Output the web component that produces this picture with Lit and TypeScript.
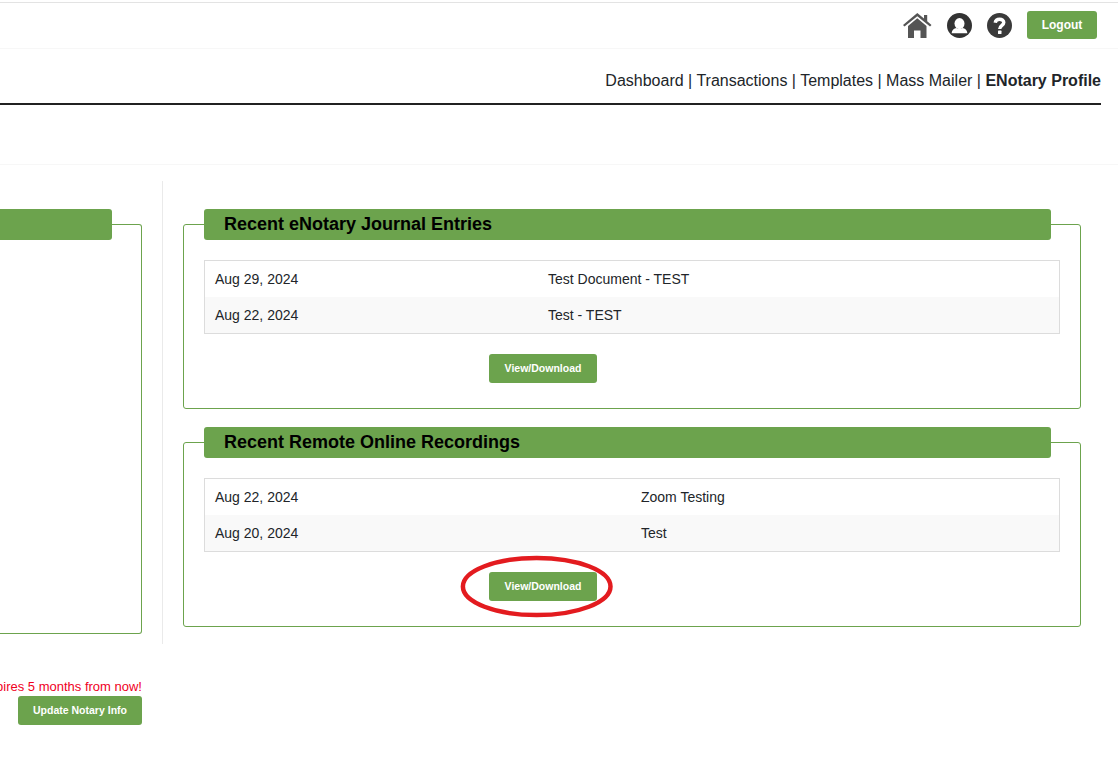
import { LitElement, html, css } from "lit";
import { customElement } from "lit/decorators.js";

@customElement("app-root")
export class AppRoot extends LitElement {
  static styles = css`
    :host { display: block; position: relative; width: 1118px; height: 758px; overflow: hidden; background: #fff; color: #212529; font-family: "Liberation Sans", Arial, sans-serif; }
    .rule { margin-top: 2px; height: 1px; background: #e3e3e3; }
    .topbar { height: 45px; border-bottom: 1px solid #f7f7f7; display: flex; justify-content: flex-end; align-items: center; padding: 0 21px 0 0; }
    .icons { display: flex; align-items: center; margin-right: 15px; }
    .home { width: 29px; height: 26px; margin-right: 15px; }
    .user { width: 25px; height: 25px; margin-right: 15px; }
    .help { width: 25px; height: 25px; }
    .btn { display: flex; align-items: center; justify-content: center; background: #6ca34d; color: #fff; font-weight: bold; border-radius: 3px; }
    .logout { width: 70px; height: 28px; font-size: 12px; margin-top: -1px; }
    .nav { width: 1101px; height: 44px; padding-top: 10px; border-bottom: 2px solid #212121; display: flex; justify-content: flex-end; align-items: center; font-size: 16px; white-space: pre; line-height: 18px; }
    .sub { height: 59px; border-bottom: 1px solid #f7f7f7; }
    .main { display: flex; align-items: flex-start; padding-top: 16px; }
    .left { width: 142px; flex: none; margin-top: 43px; }
    .right { width: 898px; flex: none; margin-left: 20px; border-left: 1px solid #eaeaea; padding: 43px 0 17px 20px; }
    .panel { border: 1px solid #6ca34d; border-radius: 3px; box-sizing: border-box; }
    .panel + .panel { margin-top: 33px; }
    .left .panel { border-left: none; border-radius: 0 3px 3px 0; height: 410px; }
    .head { margin: -16px 29px 0 20px; height: 31px; background: #6ca34d; border-radius: 3px; color: #000; font-size: 18px; font-weight: bold; line-height: 30px; padding-left: 20px; box-sizing: border-box; }
    .left .head { margin: -16px 29px 0 0; border-radius: 0 3px 3px 0; }
    .tbl { margin: 20px 20px 0; border: 1px solid #dcdcdc; font-size: 14px; }
    .row { display: flex; height: 36px; align-items: center; color: #212529; }
    .row:nth-child(2) { background: #f9f9f9; }
    .date { flex: none; padding-left: 10px; box-sizing: border-box; }
    .a .date { width: 343px; }
    .b .date { width: 436px; }
    .foot { display: flex; margin: 20px 0 25px 305px; }
    .view { width: 108px; height: 28px; padding-bottom: 1px; font-size: 10.5px; }
    .exp { margin-top: 44px; height: 17px; display: flex; justify-content: flex-end; color: #f0001e; font-size: 13px; line-height: 17px; white-space: nowrap; overflow: hidden; }
    .update { width: 124px; height: 28px; padding-bottom: 1px; margin: 1px 0 0 18px; font-size: 10.5px; }
    .mark { position: absolute; left: 460px; top: 555px; width: 154px; height: 64px; pointer-events: none; }
  `;

  render() {
    return html`
      <div class="rule"></div>
      <div class="topbar">
        <div class="icons">
          <svg class="home" viewBox="0 0 29 26">
            <path fill="#555" d="M14.3 0 L0 12 L1.5 13.6 L14.3 3.2 L27 13.6 L28.5 12 L24.2 8.3 V2 H21 V5.6 Z"/>
            <path fill="#555" d="M14.3 5.2 L5 13 V25 H11 V17.5 H17.5 V25 H23.5 V13 Z"/>
          </svg>
          <svg class="user" viewBox="0 0 25 25">
            <circle cx="12.5" cy="12.5" r="12.5" fill="#333"/>
            <ellipse cx="12.5" cy="10.6" rx="5" ry="5.6" fill="#fff"/>
            <path fill="#fff" d="M4.6 20.2 C5 17 7 15.6 9.4 15 C11 16.2 14 16.2 15.6 15 C18 15.6 20 17 20.4 20.2 Z"/>
          </svg>
          <svg class="help" viewBox="0 0 25 25">
            <circle cx="12.5" cy="12.5" r="12.5" fill="#3a3a3a"/>
            <path fill="none" stroke="#fff" stroke-width="3.4" d="M8.2 9.8 C8.6 7.2 10.4 6.2 12.6 6.2 C15 6.2 16.8 7.6 16.8 9.6 C16.8 12.4 12.7 12.4 12.7 16"/>
            <rect x="11" y="17.6" width="3.5" height="3.4" rx="0.6" fill="#fff"/>
          </svg>
        </div>
        <div class="btn logout">Logout</div>
      </div>
      <div class="nav"><span>Dashboard | Transactions | Templates | Mass Mailer | <b>ENotary Profile</b></span></div>
      <div class="sub"></div>
      <div class="main">
        <div class="left">
          <div class="panel"><div class="head"></div></div>
          <div class="exp"><span>Your notary commission expires 5 months from now!</span></div>
          <div class="btn update">Update Notary Info</div>
        </div>
        <div class="right">
          <div class="panel a">
            <div class="head">Recent eNotary Journal Entries</div>
            <div class="tbl">
              <div class="row"><span class="date">Aug 29, 2024</span><span>Test Document - TEST</span></div>
              <div class="row"><span class="date">Aug 22, 2024</span><span>Test - TEST</span></div>
            </div>
            <div class="foot"><div class="btn view">View/Download</div></div>
          </div>
          <div class="panel b">
            <div class="head">Recent Remote Online Recordings</div>
            <div class="tbl">
              <div class="row"><span class="date">Aug 22, 2024</span><span>Zoom Testing</span></div>
              <div class="row"><span class="date">Aug 20, 2024</span><span>Test</span></div>
            </div>
            <div class="foot"><div class="btn view">View/Download</div></div>
          </div>
        </div>
      </div>
      <svg class="mark" viewBox="0 0 154 64">
        <ellipse cx="76.7" cy="31.5" rx="73.8" ry="28.6" fill="none" stroke="#e31b1f" stroke-width="4.5"/>
      </svg>
    `;
  }
}
